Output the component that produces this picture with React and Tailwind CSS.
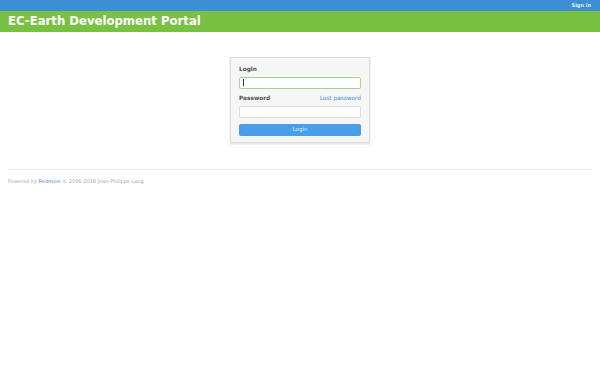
export default function App() {
  const f = { fontFamily: '"DejaVu Sans", Verdana, sans-serif' };
  return (
    <div style={f} className="min-h-[375px] bg-white">
      <div className="h-[11px] bg-[#3e8fd1] flex justify-end items-center pr-[9px]">
        <span className="text-[5px] font-bold text-[#e6f0fa] leading-none">Sign in</span>
      </div>
      <div className="h-[21px] bg-[#79c143] flex items-center pl-[8px]">
        <h1 className="text-[11.7px] font-bold text-white leading-none">EC-Earth Development Portal</h1>
      </div>
      <div className="px-[8px]">
        <div className="flex justify-center pt-[25px]">
          <div className="w-[140px] h-[86px] bg-[#f6f6f6] border border-[#dddddd] shadow-[0_1px_2px_rgba(0,0,0,0.15)] px-[8px] pt-[9px]">
            <div className="text-[5.8px] font-bold text-[#505050] leading-none">Login</div>
            <div className="mt-[4px] h-[12px] bg-white border border-[#a8d58a] rounded-[2px] flex items-center pl-[3px]">
              <div className="w-[1px] h-[7px] bg-[#333]"></div>
            </div>
            <div className="mt-[7px] flex justify-between items-center">
              <span className="text-[5.8px] font-bold text-[#505050] leading-none">Password</span>
              <span className="text-[5.8px] text-[#4a8ac9] leading-none">Lost password</span>
            </div>
            <div className="mt-[4px] h-[12px] bg-white border border-[#dcdcdc] rounded-[2px]"></div>
            <div className="mt-[6px] h-[12px] bg-[#4a9ee8] rounded-[2px] flex items-center justify-center">
              <span className="text-[5.5px] text-[#dcecfb] leading-none">Login</span>
            </div>
          </div>
        </div>
        <div className="mt-[26px] border-t border-[#eeeeee]"></div>
        <div className="pt-[9px] text-[5px] text-[#aaaaaa] leading-none">
          Powered by <span className="text-[#4a8ac9]">Redmine</span> © 2006-2018 Jean-Philippe Lang
        </div>
      </div>
    </div>
  );
}
